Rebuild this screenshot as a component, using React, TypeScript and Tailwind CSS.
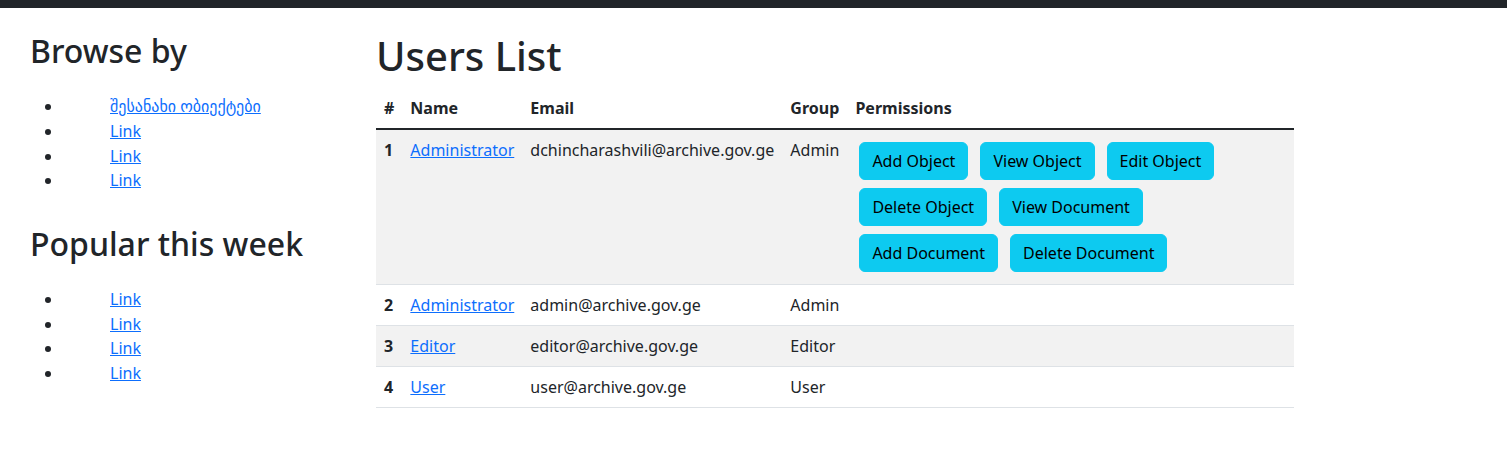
const browseLinks = ['შესანახი ობიექტები', 'Link', 'Link', 'Link'];
const popularLinks = ['Link', 'Link', 'Link', 'Link'];

const users = [
  {
    id: 1,
    name: 'Administrator',
    email: 'dchincharashvili@archive.gov.ge',
    group: 'Admin',
    permissions: ['Add Object', 'View Object', 'Edit Object', 'Delete Object', 'View Document', 'Add Document', 'Delete Document'],
  },
  { id: 2, name: 'Administrator', email: 'admin@archive.gov.ge', group: 'Admin', permissions: [] },
  { id: 3, name: 'Editor', email: 'editor@archive.gov.ge', group: 'Editor', permissions: [] },
  { id: 4, name: 'User', email: 'user@archive.gov.ge', group: 'User', permissions: [] },
];

const LinkList = ({ items }: { items: string[] }) => (
  <ul className="list-disc pl-8 mt-6 mb-4">
    {items.map((l, i) => (
      <li key={i} className="leading-[24.6px]">
        <a href="#" className="ml-[47px] text-[#0d6efd] underline">
          {l}
        </a>
      </li>
    ))}
  </ul>
);

const App = () => {
  return (
    <div
      className="min-h-screen bg-white text-[#212529] text-base leading-6"
      style={{ fontFamily: '"Noto Sans", "DejaVu Sans", sans-serif' }}
    >
      <div className="h-2 bg-[#212529]" />

      <div className="flex mt-6">
        <aside className="w-[376px] shrink-0 pl-[31px]">
          <h2 className="text-[32px] leading-[38.4px] font-medium mb-2 -ml-px">Browse by</h2>
          <LinkList items={browseLinks} />
          <h2 className="text-[32px] leading-[38.4px] font-medium mb-2 mt-8 -ml-px">Popular this week</h2>
          <LinkList items={popularLinks} />
        </aside>

        <main className="flex-1 min-w-0">
          <h1 className="text-[40px] leading-[48px] font-medium mb-2">Users List</h1>
          <table className="w-[918px] border-collapse text-left">
            <thead>
              <tr>
                <th className="w-[26px] p-2 font-bold border-b-2 border-[#212529]">#</th>
                <th className="w-[120px] p-2 font-bold border-b-2 border-[#212529]">Name</th>
                <th className="w-[260px] p-2 font-bold border-b-2 border-[#212529]">Email</th>
                <th className="w-[65px] p-2 font-bold border-b-2 border-[#212529]">Group</th>
                <th className="p-2 font-bold border-b-2 border-[#212529]">Permissions</th>
              </tr>
            </thead>
            <tbody>
              {users.map((u, i) => (
                <tr key={u.id} className={`border-b border-[#dee2e6] ${i % 2 === 0 ? 'bg-[#f2f2f2]' : 'bg-white'}`}>
                  <td className="p-2 align-top font-bold">{u.id}</td>
                  <td className="p-2 align-top">
                    <a href="#" className="text-[#0d6efd] underline">
                      {u.name}
                    </a>
                  </td>
                  <td className="p-2 align-top whitespace-nowrap">{u.email}</td>
                  <td className="p-2 align-top">{u.group}</td>
                  <td className="p-2 align-top">
                    {u.permissions.length > 0 && (
                      <div className="flex flex-wrap gap-x-1">
                        {u.permissions.map((p) => (
                          <button
                            key={p}
                            className="m-1 px-3 py-[6px] leading-6 rounded-[6px] border border-[#0dcaf0] bg-[#0dcaf0] text-black"
                          >
                            {p}
                          </button>
                        ))}
                      </div>
                    )}
                  </td>
                </tr>
              ))}
            </tbody>
          </table>
        </main>
      </div>
    </div>
  );
};

export default App;
